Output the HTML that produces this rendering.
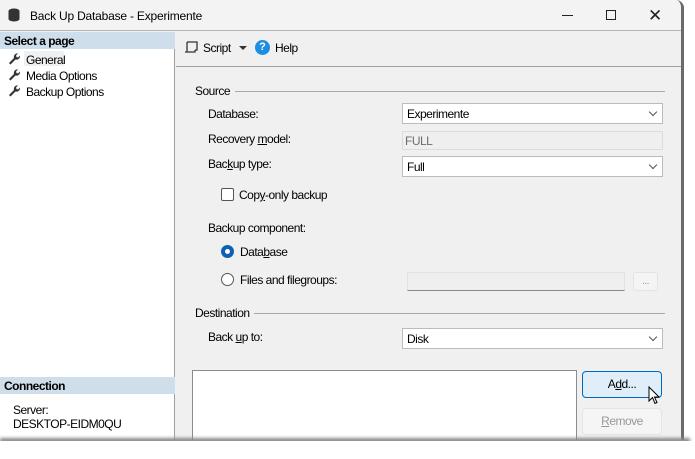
<!DOCTYPE html>
<html><head><style>
*{margin:0;padding:0;box-sizing:border-box}
body{width:695px;height:459px;background:#fff;font-family:"Liberation Sans",sans-serif;font-size:12px;color:#000;position:relative;overflow:hidden;letter-spacing:-0.5px}
.a{position:absolute}
u{text-decoration:underline}
.win{left:0;top:0;width:684px;height:440px;background:#f0f0f0;border-right:3px solid #6a6a6a;border-top-right-radius:8px;overflow:hidden}
.combo{background:#fff;border:1px solid #bcbcbc;height:21px;padding:3px 4px;font-size:12px}
.combo:after{content:"";position:absolute;right:6px;top:5px;width:5px;height:5px;border-right:1px solid #555;border-bottom:1px solid #555;transform:rotate(45deg)}
</style></head><body>
<div class="a win">
 <div class="a" style="left:0;top:0;width:684px;height:31px;background:#f3f3f3;border-bottom:1px solid #b5b5b5"></div>
 <svg class="a" style="left:8px;top:8px" width="12" height="14" viewBox="0 0 12 14"><ellipse cx="6" cy="3" rx="5.5" ry="2.5" fill="#333"/><rect x="0.5" y="3" width="11" height="8" fill="#333"/><ellipse cx="6" cy="11" rx="5.5" ry="2.5" fill="#333"/></svg>
 <div class="a" style="left:30px;top:9px;font-size:12px;letter-spacing:-0.2px">Back Up Database - Experimente</div>
 <div class="a" style="left:562px;top:15px;width:11px;height:1px;background:#222"></div>
 <div class="a" style="left:606px;top:10px;width:10px;height:10px;border:1px solid #222"></div>
 <div class="a" style="left:648px;top:6px;font-size:17px;color:#222">✕</div>
 <div class="a" style="left:0;top:32px;width:175px;height:408px;background:#fff;border-right:1px solid #a0a0a0"></div>
 <div class="a" style="left:0;top:32px;width:175px;height:17px;background:#cfdeeb;font-weight:bold;padding:2px 4px">Select a page</div>
 <div class="a" style="left:24px;top:51px;width:40px;height:15px;background:#f0f0f0"></div>
 <svg class="a" style="left:8px;top:52px" width="12" height="48" viewBox="0 0 12 48" fill="#333">
  <path id="w" d="M1 11l5-5a3.5 3.5 0 0 1 4-4.5l-2 2 .5 1.5 1.5.5 2-2a3.5 3.5 0 0 1-4.5 4l-5 5z"/>
  <use href="#w" y="16"/><use href="#w" y="32"/>
 </svg>
 <div class="a" style="left:26px;top:52px;line-height:16px">General<br>Media Options<br>Backup Options</div>
 <div class="a" style="left:0;top:377px;width:175px;height:17px;background:#cfdeeb;font-weight:bold;padding:2px 4px">Connection</div>
 <div class="a" style="left:13px;top:403px;line-height:14px">Server:<br>DESKTOP-EIDM0QU</div>
 <div class="a" style="left:176px;top:32px;width:508px;height:35px;border-bottom:1px solid #a0a0a0"></div>
 <svg class="a" style="left:184px;top:40px" width="14" height="14" viewBox="0 0 14 14" fill="none" stroke="#333" stroke-width="1.3"><path d="M3 2h10v8H11M3 2v10H1M3 12h8v-2"/></svg>
 <div class="a" style="left:203px;top:41px">Script</div>
 <div class="a" style="left:239px;top:46px;border-left:4px solid transparent;border-right:4px solid transparent;border-top:4px solid #333"></div>
 <div class="a" style="left:255px;top:40px;width:15px;height:15px;border-radius:50%;background:#1e8ee0;color:#fff;font-weight:bold;text-align:center;font-size:11px;line-height:15px;letter-spacing:0">?</div>
 <div class="a" style="left:275px;top:41px">Help</div>
 <div class="a" style="left:195px;top:84px">Source</div>
 <div class="a" style="left:235px;top:91px;width:430px;height:1px;background:#a8a8a8"></div>
 <div class="a" style="left:208px;top:107px">Database:</div>
 <div class="a combo" style="left:402px;top:103px;width:261px">Experimente</div>
 <div class="a" style="left:208px;top:132px">Recovery <u>m</u>odel:</div>
 <div class="a" style="left:402px;top:131px;width:261px;height:19px;border:1px solid #dcdcdc;background:#efefef;color:#6d6d6d;padding:2px 2px">FULL</div>
 <div class="a" style="left:208px;top:157px">Bac<u>k</u>up type:</div>
 <div class="a combo" style="left:402px;top:156px;width:261px">Full</div>
 <div class="a" style="left:221px;top:188px;width:13px;height:13px;border:1px solid #555;border-radius:2px;background:#fff"></div>
 <div class="a" style="left:239px;top:188px">Cop<u>y</u>-only backup</div>
 <div class="a" style="left:208px;top:221px">Backup component:</div>
 <div class="a" style="left:221px;top:245px;width:13px;height:13px;border-radius:50%;background:#0f5fb5"><div class="a" style="left:4px;top:4px;width:5px;height:5px;border-radius:50%;background:#fff"></div></div>
 <div class="a" style="left:240px;top:245px">Data<u>b</u>ase</div>
 <div class="a" style="left:221px;top:273px;width:13px;height:13px;border-radius:50%;border:1px solid #555;background:#fff"></div>
 <div class="a" style="left:240px;top:273px">Files and file<u>g</u>roups:</div>
 <div class="a" style="left:407px;top:272px;width:218px;height:19px;background:#efefef;border:1px solid #e2e2e2;border-bottom:1px solid #888"></div>
 <div class="a" style="left:633px;top:272px;width:25px;height:19px;background:#f4f4f4;border:1px solid #e4e4e4;border-radius:3px;color:#999;text-align:center;font-size:10px;line-height:18px">...</div>
 <div class="a" style="left:195px;top:306px">Destination</div>
 <div class="a" style="left:254px;top:313px;width:411px;height:1px;background:#a8a8a8"></div>
 <div class="a" style="left:208px;top:330px">Back <u>u</u>p to:</div>
 <div class="a combo" style="left:402px;top:328px;width:261px">Disk</div>
 <div class="a" style="left:192px;top:370px;width:385px;height:80px;background:#fff;border:1px solid #8c8c8c"></div>
 <div class="a" style="left:582px;top:371px;width:80px;height:27px;background:#e0eef9;border:1px solid #0067c0;border-radius:4px;text-align:center;line-height:25px">A<u>d</u>d...</div>
 <div class="a" style="left:582px;top:408px;width:80px;height:27px;background:#f5f5f5;border:1px solid #e4e4e4;border-radius:4px;text-align:center;line-height:25px;color:#999"><u>R</u>emove</div>
 <svg class="a" style="left:648px;top:386px" width="12" height="19" viewBox="0 0 12 19"><path d="M1 1v14l3.5-3.5 2.5 6 2-1-2.5-5.5H11z" fill="#fff" stroke="#000" stroke-width="1"/></svg>
</div>
<div class="a" style="left:0;top:438px;width:690px;height:5px;background:#888;filter:blur(1.5px)"></div>
<div class="a" style="left:0;top:441px;width:695px;height:18px;background:#fff"></div>
</body></html>
